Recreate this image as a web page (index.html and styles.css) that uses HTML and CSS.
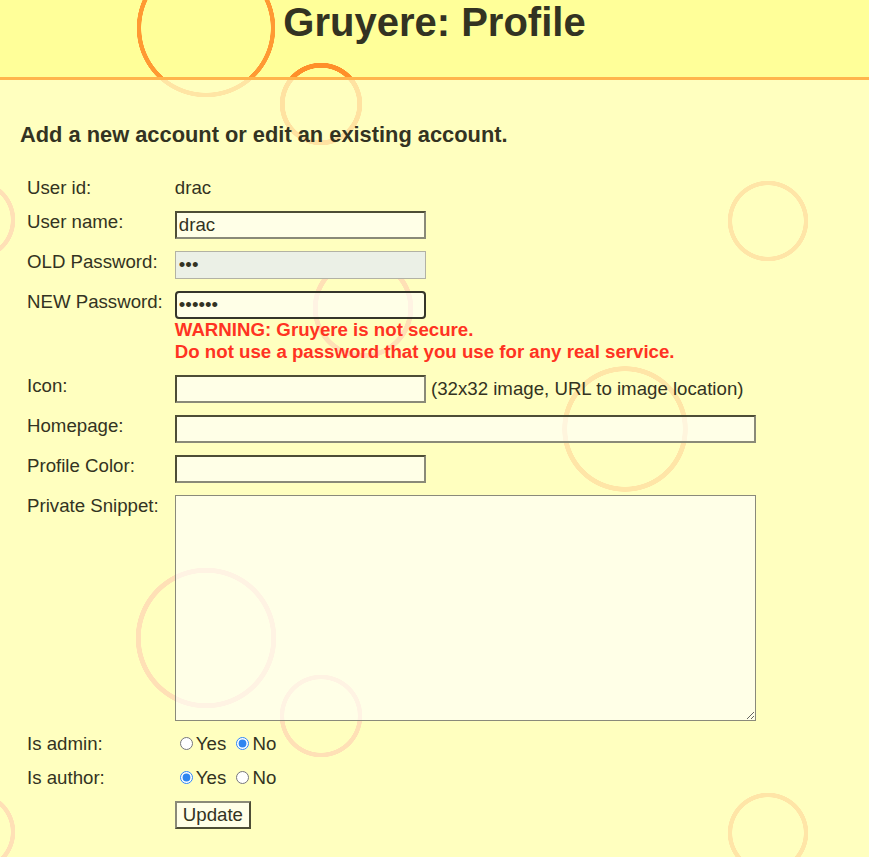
FILE: index.html
```html
<!DOCTYPE html>
<html lang="en">
<head>
<meta charset="utf-8">
<title>Gruyere: Profile</title>
<link rel="stylesheet" href="styles.css">
</head>
<body>
<div class="page">
  <header class="header">
    <h1 class="title">Gruyere: Profile</h1>
  </header>
  <main class="content">
    <h3 class="intro">Add a new account or edit an existing account.</h3>
    <form class="profile-form">
      <table class="form-table">
        <tr>
          <td class="label">User id:</td>
          <td class="value">drac</td>
        </tr>
        <tr>
          <td class="label">User name:</td>
          <td class="value"><input class="field short" type="text" value="drac"></td>
        </tr>
        <tr>
          <td class="label">OLD Password:</td>
          <td class="value"><input class="field short autofill" type="password" value="abc"></td>
        </tr>
        <tr>
          <td class="label">NEW Password:</td>
          <td class="value"><input class="field short focused" type="password" value="abcdef"><br><span class="warning">WARNING: Gruyere is not secure.<br>Do not use a password that you use for any real service.</span></td>
        </tr>
        <tr>
          <td class="label">Icon:</td>
          <td class="value"><input class="field short" type="text"> (32x32 image, URL to image location)</td>
        </tr>
        <tr>
          <td class="label">Homepage:</td>
          <td class="value"><input class="field long" type="text"></td>
        </tr>
        <tr>
          <td class="label">Profile Color:</td>
          <td class="value"><input class="field short" type="text"></td>
        </tr>
        <tr>
          <td class="label">Private Snippet:</td>
          <td class="value"><textarea class="snippet"></textarea></td>
        </tr>
        <tr>
          <td class="label">Is admin:</td>
          <td class="value"><input class="radio" type="radio" name="is_admin">Yes <input class="radio" type="radio" name="is_admin" checked>No</td>
        </tr>
        <tr>
          <td class="label">Is author:</td>
          <td class="value"><input class="radio" type="radio" name="is_author" checked>Yes <input class="radio" type="radio" name="is_author">No</td>
        </tr>
        <tr>
          <td class="label"></td>
          <td class="value"><button class="update" type="button">Update</button></td>
        </tr>
      </table>
    </form>
  </main>
</div>
</body>
</html>
```

FILE: styles.css
```css
html, body {
  margin: 0;
  padding: 0;
}

body {
  font-family: "Liberation Sans", Arial, sans-serif;
  font-size: 18.67px;
  color: #333322;
}

.page {
  min-height: 100vh;
  display: flex;
  flex-direction: column;
  background-color: #ffff99;
  background-image:
    radial-gradient(circle at 206px 28px, transparent 64.5px, #ff9933 65px, #ff9933 69px, transparent 69.5px),
    radial-gradient(circle at 321px 104px, transparent 36px, #ff8f2a 36.5px, #ff8f2a 41px, transparent 41.5px),
    radial-gradient(circle at -25px 220px, transparent 35.5px, #ff8877 36px, #ff8877 40px, transparent 40.5px),
    radial-gradient(circle at 768px 221px, transparent 35.5px, #ff9940 36px, #ff9940 40px, transparent 40.5px),
    radial-gradient(circle at 363px 308px, transparent 45px, #ff8877 45.5px, #ff8877 50px, transparent 50.5px),
    radial-gradient(circle at 625px 429px, transparent 57.5px, #ff9940 58px, #ff9940 62.5px, transparent 63px),
    radial-gradient(circle at 206px 638px, transparent 65px, #ff8877 65.5px, #ff8877 70px, transparent 70.5px),
    radial-gradient(circle at 321px 716px, transparent 36.5px, #ff8877 37px, #ff8877 41px, transparent 41.5px),
    radial-gradient(circle at -25px 832px, transparent 35.5px, #ff8877 36px, #ff8877 40px, transparent 40.5px),
    radial-gradient(circle at 768px 833px, transparent 35.5px, #ff9940 36px, #ff9940 40px, transparent 40.5px);
  background-repeat: no-repeat;
}

.header {
  height: 77px;
  border-bottom: 3px solid #ffb54c;
  text-align: center;
}

.title {
  margin: 2px 0 0;
  font-size: 40px;
  line-height: 40px;
  font-weight: bold;
  color: #333322;
}

.content {
  flex: 1;
  padding: 20px;
  background: rgba(255, 255, 204, 0.74);
}

.intro {
  margin: 21.84px 0;
  font-size: 21.84px;
  font-weight: bold;
}

.profile-form {
  margin: 0;
}

.form-table {
  border-spacing: 2px;
}

.form-table td {
  padding: 5px;
  vertical-align: top;
  font-size: 18.67px;
  line-height: normal;
}

.label {
  white-space: nowrap;
}

.field {
  box-sizing: border-box;
  height: 28px;
  margin: 0;
  padding: 1px 2px;
  font-family: "Liberation Sans", Arial, sans-serif;
  font-size: 18.67px;
  color: #333322;
  background: rgba(255, 255, 255, 0.62);
  border-width: 2px;
  border-style: solid;
  border-color: #4e4e36 #8a8a78 #8a8a78 #4e4e36;
  outline: none;
}

.short {
  width: 251px;
}

.long {
  width: 581px;
}

.autofill {
  background: #ebf0e6;
  border: 1px solid #b2b2a4;
  padding: 1px 3px;
}

.focused {
  border: 2px solid #35352a;
  border-radius: 4px;
}

.warning {
  color: #ff3322;
  font-weight: bold;
}

.snippet {
  display: block;
  box-sizing: border-box;
  width: 581px;
  height: 226px;
  margin: 0;
  padding: 2px;
  border: 1px solid #8a8a7a;
  background: rgba(255, 255, 255, 0.62);
  font-family: "Liberation Mono", monospace;
  font-size: 13.33px;
}

.radio {
  margin: 3px 3px 0 5px;
  accent-color: #2f86f0;
}

.update {
  box-sizing: border-box;
  height: 28px;
  margin: 0;
  padding: 1px 6px;
  font-family: "Liberation Sans", Arial, sans-serif;
  font-size: 18.67px;
  color: #333322;
  background: rgba(255, 255, 255, 0.62);
  border-width: 2px;
  border-style: solid;
  border-color: #8a8a78 #4e4e36 #4e4e36 #8a8a78;
}
```
